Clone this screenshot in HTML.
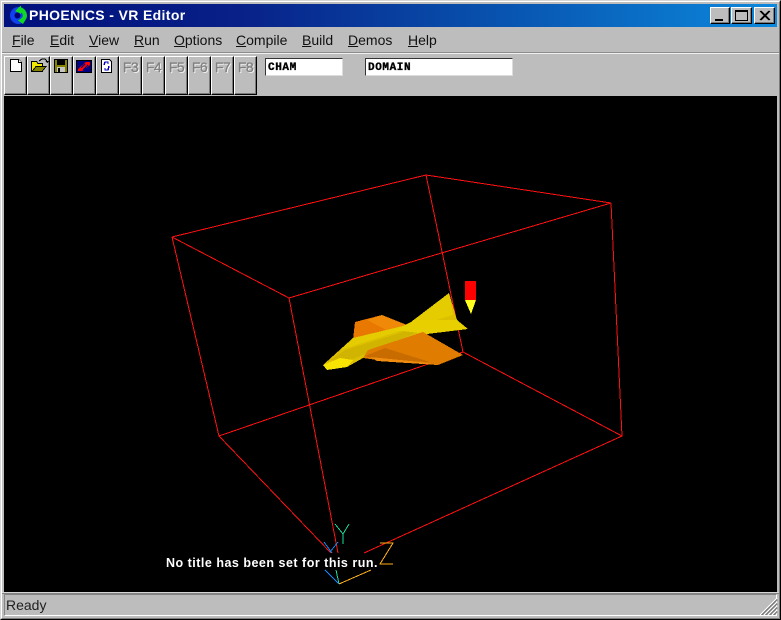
<!DOCTYPE html>
<html><head><meta charset="utf-8">
<style>
html,body{margin:0;padding:0;background:#bdbdbd}
#w{position:relative;width:781px;height:620px;overflow:hidden;background:#bdbdbd;font-family:"Liberation Sans",sans-serif}
#w div,#w span.a{position:absolute}
.m{top:31px;font-size:14px;line-height:18px;color:#111;white-space:nowrap}
.m u{text-decoration:underline}
.b{top:56px;width:21px;height:37px;background:#bdbdbd;border:1px solid;border-color:#fff #000 #000 #fff;box-shadow:inset -1px -1px 0 #7b7b7b}
.f{top:60px;width:23px;text-align:center;font-size:14px;letter-spacing:-.6px;line-height:15px;color:#808080;text-shadow:1px 1px 0 #f4f4f4;-webkit-text-stroke:.3px #808080}
.t{top:58px;height:16px;background:#fff;border:1px solid;border-color:#333 #dcdcdc #dcdcdc #333;font:bold 11px/18px "Liberation Mono",monospace;letter-spacing:.6px;color:#000;padding-left:2px;box-sizing:content-box;-webkit-text-stroke:.35px #000}
.c{top:7px;width:18px;height:15px;background:#bdbdbd;border:1px solid;border-color:#fff #000 #000 #fff;box-shadow:inset -1px -1px 0 #7b7b7b}
</style></head><body>
<div id="w">
<div style="left:0;top:0;width:781px;height:620px;box-sizing:border-box;border:1px solid;border-color:#d6d6d6 #000 #000 #d6d6d6"></div>
<div style="left:1px;top:1px;width:779px;height:618px;box-sizing:border-box;border:1px solid;border-color:#fff #7b7b7b #7b7b7b #fff"></div>

<div style="left:4px;top:4px;width:773px;height:23px;background:linear-gradient(90deg,#00107c 0%,#082088 30%,#0850ac 62%,#0c88dc 100%)"></div>
<svg style="position:absolute;left:9px;top:5px" width="20" height="21" viewBox="0 0 20 21">
<circle cx="9.5" cy="10.5" r="8.5" fill="#1040f0"/>
<path d="M10 2 A8.5 8.5 0 0 1 17.5 13 L14 19 L9 15.5 L12 13.5 A3.6 3.6 0 0 0 9 7 L7 5.5 Z" fill="#10d820"/>
<path d="M6 6 L12 0.5 L12 9 Z" fill="#10d820"/>
<circle cx="8.5" cy="10.5" r="3" fill="#000070"/>
</svg>
<div style="left:29px;top:6px;font-size:14px;line-height:18px;font-weight:bold;color:#fff;white-space:nowrap;letter-spacing:.36px">PHOENICS - VR Editor</div>

<div class="c" style="left:710px"><svg width="18" height="15" style="display:block"><rect x="4" y="11" width="8" height="2" fill="#000"/></svg></div>
<div class="c" style="left:731px;width:19px"><svg width="19" height="15" style="display:block"><path d="M3.5 2.5H15.5V12.5H3.5Z M3 3.5H16" fill="none" stroke="#000"/></svg></div>
<div class="c" style="left:754px;width:19px"><svg width="19" height="15" style="display:block"><path d="M5 3L14 12M6 3L15 12M14 3L5 12M15 3L6 12" stroke="#000" stroke-width="1.2"/></svg></div>

<div class="m" style="left:12px"><u>F</u>ile</div>
<div class="m" style="left:50px"><u>E</u>dit</div>
<div class="m" style="left:89px"><u>V</u>iew</div>
<div class="m" style="left:134px"><u>R</u>un</div>
<div class="m" style="left:174px"><u>O</u>ptions</div>
<div class="m" style="left:236px"><u>C</u>ompile</div>
<div class="m" style="left:302px"><u>B</u>uild</div>
<div class="m" style="left:348px"><u>D</u>emos</div>
<div class="m" style="left:408px"><u>H</u>elp</div>

<div style="left:2px;top:52px;width:777px;height:1px;background:#8c8c8c"></div>
<div style="left:2px;top:53px;width:777px;height:1px;background:#f0f0f0"></div>

<div class="b" style="left:4px"></div><div class="b" style="left:27px"></div><div class="b" style="left:50px"></div><div class="b" style="left:73px"></div><div class="b" style="left:96px"></div><div class="b" style="left:119px"></div><div class="b" style="left:142px"></div><div class="b" style="left:165px"></div><div class="b" style="left:188px"></div><div class="b" style="left:211px"></div><div class="b" style="left:234px"></div>

<svg style="position:absolute;left:4px;top:56px" width="120" height="20" shape-rendering="crispEdges">
<path d="M6.5 3.5H14.5L17.5 6.5V15.5H6.5Z" fill="#fff" stroke="#000"/>
<path d="M14.5 3.5V6.5H17.5" fill="#fff" stroke="#000"/>
<path d="M27.5 9.5V5.5H32.5L34 7.5H38.5V15.5H27.5Z" fill="#f0e800" stroke="#000"/>
<path d="M28 15.5L32 10.5H42L38 15.5Z" fill="#848400" stroke="#000"/>
<path d="M35 5L38 3H41L43 5" fill="none" stroke="#000"/>
<path d="M41 5H45L43 7Z" fill="#000"/>
<rect x="50.5" y="3.5" width="13" height="13" fill="#848400" stroke="#000"/>
<rect x="53" y="4" width="8" height="5" fill="#000"/>
<rect x="53" y="11" width="8" height="5" fill="#c6c6c6"/>
<rect x="54" y="12" width="2" height="4" fill="#000"/>
<rect x="72" y="4" width="16" height="13" fill="#000"/>
<rect x="73" y="5" width="14" height="11" fill="#000080"/>
<path d="M74 13L82 6H86V9L78 15H74Z" fill="#ff0000"/>
<path d="M77 12L81 8M79 14L84 9" stroke="#000080"/>
<path d="M97.5 3.5H105.5L107.5 5.5V16.5H97.5Z" fill="#fff" stroke="#000"/>
<path d="M100 9L101 6H104V8M105 10L104 14H101V12" fill="none" stroke="#0000c0" stroke-width="1.4"/>
</svg>

<div class="f" style="left:119px">F3</div><div class="f" style="left:142px">F4</div><div class="f" style="left:165px">F5</div><div class="f" style="left:188px">F6</div><div class="f" style="left:211px">F7</div><div class="f" style="left:234px">F8</div>

<div class="t" style="left:265px;width:74px">CHAM</div>
<div class="t" style="left:365px;width:144px">DOMAIN</div>

<div style="left:4px;top:96px;width:773px;height:496px;background:#000"></div>
<svg style="position:absolute;left:0;top:0" width="781" height="620">
<g fill="none" stroke="#ff1010" stroke-width="1" shape-rendering="crispEdges">
<path d="M172 237L426 175L611 203L289 298L172 237"/>
<path d="M172 237L219 436L463 352L622 436L611 203"/>
<path d="M426 175L463 352"/>
<path d="M289 298L338 553"/>
<path d="M219 436L331 553"/>
<path d="M622 436L364 553"/>
</g>
<g shape-rendering="crispEdges">
<path d="M355 322L382 315L407 325L380 345L353 340Z" fill="#e87800"/>
<path d="M367 320L382 315L407 325L390 332Z" fill="#f08808"/>
<path d="M323 365L353 338L407 325L449 293L457 320L468 329L427 334L363 358L347 367L327 370Z" fill="#dcc000"/>
<path d="M340 350L353 338L407 325L449 293L453 315L400 331Z" fill="#e4cc00"/>
<path d="M330 360L345 350L400 333L425 320L426 329L363 355L345 362Z" fill="#d0b400"/>
<path d="M323 365L340 358L353 360L347 367L327 370Z" fill="#f8e400"/>
<path d="M395 330L415 320L457 320L468 329L427 334Z" fill="#e8d000"/>
<path d="M363 358L368 350L423 332L463 355L438 365L377 360Z" fill="#e07c00"/>
<path d="M365 356L385 348L430 362L377 360Z" fill="#c86c00"/>
<path d="M370 357L420 362L438 365L377 361Z" fill="#f08c10"/>
<rect x="465" y="281" width="11" height="19" fill="#ff0000"/>
<path d="M465 300H476L471 314Z" fill="#ffff20"/>
</g>
<g fill="none" shape-rendering="crispEdges">
<path d="M335 524L343 534M349 524L343 534V544M339 584L336 570" stroke="#18e0a0"/>
<path d="M324 542L332 553M338 542L330 552M339 584L325 570" stroke="#1888f8"/>
<path d="M380 543H393L380 564H393M339 584L371 570" stroke="#ffb018"/>
</g>
</svg>
<div style="left:166px;top:555px;font-size:12.5px;line-height:16px;font-weight:bold;color:#fff;white-space:nowrap;letter-spacing:.5px">No title has been set for this run.</div>

<div style="left:2px;top:592px;width:777px;height:1px;background:#d6d6d6"></div>
<div style="left:2px;top:593px;width:777px;height:1px;background:#848484"></div>
<div style="left:4px;top:594px;width:773px;height:22px;box-sizing:border-box;border:1px solid;border-color:#848484 #fff #fff #848484"></div>
<div style="left:6px;top:596px;font-size:14px;line-height:18px;color:#222">Ready</div>
<svg style="position:absolute;left:760px;top:598px" width="18" height="18" shape-rendering="crispEdges">
<path d="M1 17L17 1M2 17L17 2M5 17L17 5M6 17L17 6M9 17L17 9M10 17L17 10M13 17L17 13M14 17L17 14" stroke="#7b7b7b"/>
<path d="M0 17L17 0M4 17L17 4M8 17L17 8M12 17L17 12" stroke="#fff"/>
</svg>
</div>
</body></html>
